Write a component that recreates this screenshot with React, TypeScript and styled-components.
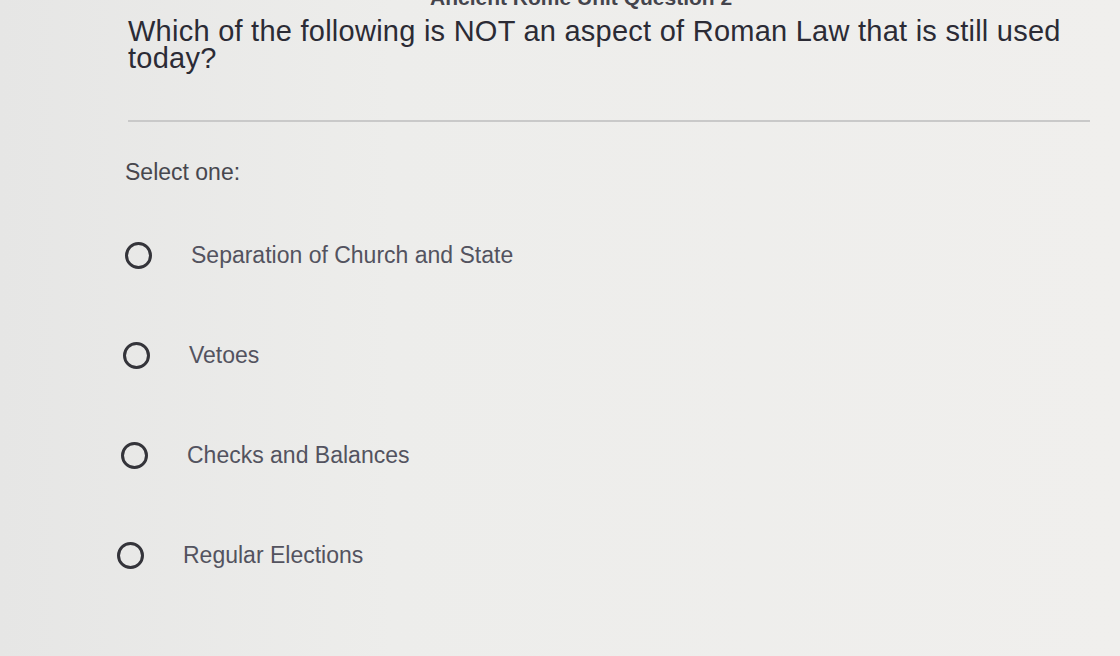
import React from 'react';
import styled, { createGlobalStyle } from 'styled-components';

const GlobalStyle = createGlobalStyle`
    html, body {
        margin: 0;
        padding: 0;
        background: #ecebe9;
        font-family: "Liberation Sans", Arial, sans-serif;
    }
`;

const Page = styled.div`
    width: 1120px;
    height: 656px;
    overflow: hidden;
    background: linear-gradient(90deg, #e6e6e5 0%, #ededeb 35%, #f0efed 100%);
    padding: 0 30px 0 128px;
    box-sizing: border-box;
`;

// heading of the quiz page, scrolled almost out of view
const Title = styled.div`
    margin-top: -16px;
    height: 28px;
    line-height: 28px;
    font-size: 21px;
    font-weight: bold;
    color: #44444c;
    padding-left: 302px;
    white-space: nowrap;
`;

const Question = styled.p`
    margin: 6px 0 0;
    font-size: 29px;
    line-height: 27px;
    letter-spacing: 0.25px;
    color: #2b2b35;
    max-width: 960px;
`;

const Divider = styled.hr`
    margin: 48px 0 0;
    width: 962px;
    border: none;
    border-top: 2px solid #c9c9c9;
`;

const Prompt = styled.div`
    margin-top: 38px;
    margin-left: -3px;
    font-size: 23px;
    line-height: 24px;
    color: #47474e;
`;

const Options = styled.div`
    display: flex;
    flex-direction: column;
    gap: 73px;
    margin-top: 58px;
`;

const Option = styled.label<{ shift: number }>`
    display: flex;
    align-items: center;
    height: 27px;
    margin-left: ${p => p.shift}px;
`;

const Radio = styled.span`
    width: 21px;
    height: 21px;
    border: 3px solid #34343a;
    border-radius: 50%;
    flex: none;
`;

const OptionText = styled.span`
    margin-left: 39px;
    font-size: 23px;
    color: #53535f;
`;

const options = [
    { text: 'Separation of Church and State', shift: -3 },
    { text: 'Vetoes', shift: -5 },
    { text: 'Checks and Balances', shift: -7 },
    { text: 'Regular Elections', shift: -11 },
];

const App = () => (
    <>
        <GlobalStyle />
        <Page>
            <Title>Ancient Rome Unit Question 2</Title>
            <Question>
                Which of the following is NOT an aspect of Roman Law that is still used today?
            </Question>
            <Divider />
            <Prompt>Select one:</Prompt>
            <Options>
                {options.map(o => (
                    <Option key={o.text} shift={o.shift}>
                        <Radio />
                        <OptionText>{o.text}</OptionText>
                    </Option>
                ))}
            </Options>
        </Page>
    </>
);

export default App;
